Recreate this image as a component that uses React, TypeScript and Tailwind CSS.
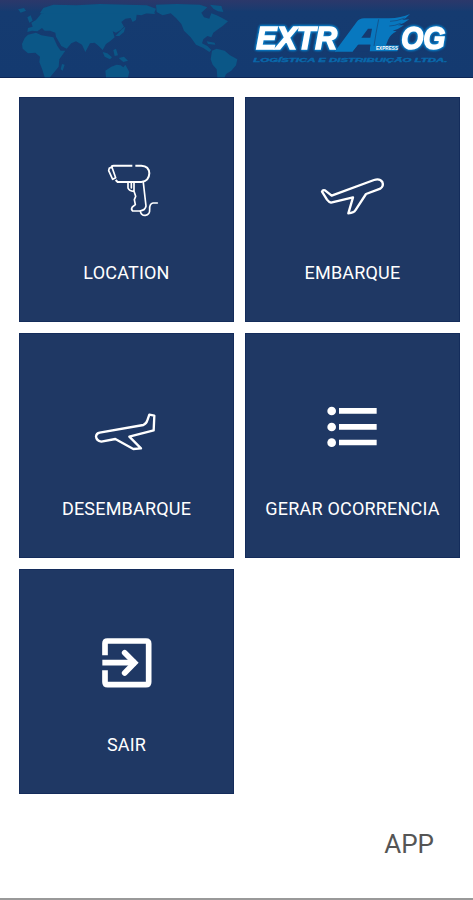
import type { ReactNode } from 'react';

function WorldMap() {
  return (
    <svg className="h-[78px] w-[240px] shrink-0" viewBox="0 0 720 234" fill="#0b5787">
      <path d="M118 48L124 40L140 38L160 38H380L440 38L468 38L462 42L440 40L424 46L410 44L408 60L398 66L392 54L376 56L364 66L372 80L362 90L348 98L338 94L344 112L330 124L318 132L308 150L296 138L284 128L270 130L256 156L246 134L228 124L214 130L200 146L184 138L168 110L166 98L150 92L134 92L126 84L112 94L96 92L82 96L84 84L98 80L94 68L108 60Z" />
      <path d="M118 42L130 24L160 14L230 16L300 12L380 14L440 16L468 26L462 40H120Z" />
      <path d="M84 104L108 98L124 106L160 112L172 138L182 152L196 152L178 178L176 200L160 220L150 232H134L126 206L118 186L120 170L106 158L84 160L68 146L66 132L74 114Z" />
      <path d="M54 28L72 24L78 32L62 38ZM82 52L92 46L98 62L88 68ZM186 192L194 194L188 212L182 208Z" />
      <path d="M366 88L376 80L372 96L358 108L346 108ZM308 156L322 160L336 172L330 178L314 170ZM340 150L348 146L354 166L344 168ZM356 174L372 170L384 182L370 186Z" />
      <path d="M316 212L334 200L350 194L362 196L370 202L376 194L388 216L384 232H318Z" />
      <path d="M468 14L530 12L600 14L622 22L604 38L612 52L628 56L634 40L650 46L662 52L684 64L668 78L654 88L640 98L634 112L622 108L610 118L606 130L622 138L634 150L628 156L610 144L588 134L572 112L552 92L544 72L528 54L512 40L488 46L470 36Z" />
      <path d="M630 14L664 18L670 36L654 34L640 26ZM620 124L644 128L646 134L624 132Z" />
      <path d="M636 152L650 146L674 152L690 166L712 178L708 196L694 212L678 222L674 232H652L650 208L638 194L632 178Z" />
    </svg>
  );
}

function Logo() {
  return (
    <svg className="h-[78px] w-[233px] shrink-0" viewBox="0 0 699 234">
      <g
        className="[filter:drop-shadow(0_0_3px_#0880cc)_drop-shadow(0_0_3px_#0874bd)_drop-shadow(0_0_2px_#0874bd)]"
        fontFamily="'Liberation Sans', sans-serif"
        fontWeight="700"
        fontStyle="italic"
        fontSize="95"
        fill="#fff"
        stroke="#fff"
        strokeWidth="5"
      >
        <text x="49" y="148" textLength="242" lengthAdjust="spacingAndGlyphs">EXTR</text>
        <text x="484" y="148" textLength="132" lengthAdjust="spacingAndGlyphs">OG</text>
      </g>
      {/* joined A and L with the wing on top */}
      <path fill="#0878bf" d="M284 155L350 66Q358 55 372 55H446Q484 54 510 42Q500 54 486 60L508 58Q494 70 474 76L492 76Q476 88 458 92L470 94Q450 104 444 120L438 136H478L472 154H388L391 134H354L338 155Z" />
      <path fill="#153a70" d="M384 86L364 113H391L396 86ZM356 134H391L389 155H338Z" />
      <path stroke="#12558f" strokeWidth="3" fill="none" d="M416 58L408 100L402 138M450 64Q470 64 494 54M448 78Q464 78 482 70" />
      <text x="408" y="149" fill="#fff" fontFamily="'Liberation Sans', sans-serif" fontWeight="700" fontSize="16" textLength="66" lengthAdjust="spacingAndGlyphs">EXPRESS</text>
      <text x="40" y="186" fill="#0968aa" stroke="#0968aa" fontFamily="'Liberation Sans', sans-serif" fontWeight="700" fontStyle="italic" fontSize="17" textLength="582" lengthAdjust="spacingAndGlyphs">LOGÍSTICA E DISTRIBUIÇÃO LTDA.</text>
    </svg>
  );
}

function Icon({ viewBox, children }: { viewBox: string; children: ReactNode }) {
  return (
    <svg className="h-20 w-[85px]" viewBox={viewBox} fill="none" stroke="#fff" strokeWidth="7" strokeLinejoin="round" strokeLinecap="round">
      {children}
    </svg>
  );
}

const items = [
  {
    label: 'LOCATION',
    icon: (
      <Icon viewBox="-33 6 255 240">
        <path strokeWidth="6" strokeLinecap="butt" d="M112 47H56Q48 47 50 54M121 47H139Q162 48 163 70Q162 94 139 96H68L62 90" />
        <path strokeWidth="5" d="M43 54L51 52L62 83L53 88L41 62Z" />
        <path strokeWidth="5" d="M99 98V114Q102 123 117 124V98M109 98V114M117 124L122 139L118 149L121 164L112 171Q107 178 113 183H134Q151 181 153 168L145 98" />
        <path strokeWidth="5" d="M136 184Q139 197 151 196Q165 194 164 178Q163 161 174 159H187" />
      </Icon>
    ),
  },
  {
    label: 'EMBARQUE',
    icon: (
      <Icon viewBox="0 -24 255 240">
        <path d="M36 95Q38 89 45 91L65 107L192 60Q209 54 217 66Q222 78 211 86L168 102L136 151Q132 159 115 160L129 112L63 128Q57 127 51 119Z" />
      </Icon>
    ),
  },
  {
    label: 'DESEMBARQUE',
    icon: (
      <Icon viewBox="-3 -36 255 240">
        <path d="M44 98L175 75Q185 70 187 61L193 44L208 47L206 91L133 110L168 145L145 147L91 117L49 125Q34 122 33 109Q34 100 44 98Z" />
      </Icon>
    ),
  },
  {
    label: 'GERAR OCORRENCIA',
    icon: (
      <Icon viewBox="-15 -21 255 240">
        <g fill="#fff" stroke="none">
          <circle cx="50" cy="48" r="13" />
          <circle cx="50" cy="96" r="13" />
          <circle cx="50" cy="143" r="13" />
          <path d="M72 39H185V56H72ZM72 87H185V104H72ZM72 134H185V151H72Z" />
        </g>
      </Icon>
    ),
  },
  {
    label: 'SAIR',
    icon: (
      <Icon viewBox="-18 -3 255 240">
        <g strokeWidth="17" strokeLinecap="butt">
          <path d="M45 91V55Q45 48 52 48H168Q176 48 176 56V171Q176 179 168 179H53Q45 179 45 171V136" />
          <path d="M37 113H137" />
          <path strokeLinejoin="miter" strokeLinecap="round" d="M104 83L134 113L104 144" />
        </g>
      </Icon>
    ),
  },
];

export default function App() {
  return (
    <div className="flex h-[900px] w-[473px] flex-col border-b-2 border-[#999] bg-white font-[Roboto,sans-serif]">
      <header className="flex h-[78px] shrink-0 border-b border-[#0c2656] bg-linear-to-b from-[#2b386a] via-[#153b70] via-15% to-[#143a70]">
        <WorldMap />
        <Logo />
      </header>

      <main className="mt-[19px] ml-[19px] grid grid-cols-[215px_215px] gap-x-[11px] gap-y-[11px]">
        {items.map((item) => (
          <button key={item.label} className="flex h-[225px] flex-col items-center border border-[#142c5b] bg-[#1f3864] pt-[54px] text-white">
            {item.icon}
            <span className="mt-[27px] text-lg leading-7 tracking-[0.2px] whitespace-nowrap">{item.label}</span>
          </button>
        ))}
      </main>

      <p className="mt-[30px] mr-[39px] text-right text-[26px] leading-10 text-[#555]">APP</p>
    </div>
  );
}
